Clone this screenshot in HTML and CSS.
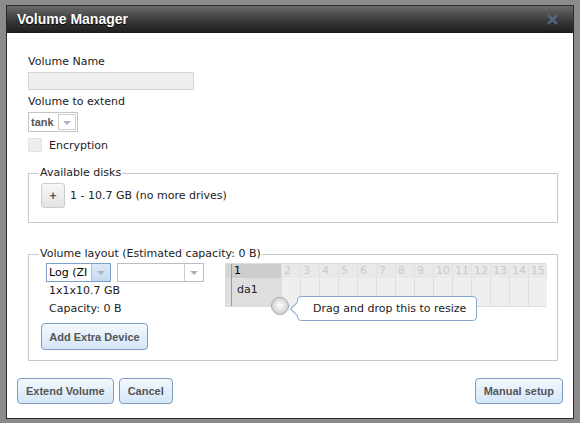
FILE: index.html
```html
<!DOCTYPE html>
<html lang="en">
<head>
    <meta charset="UTF-8">
    <meta name="viewport" content="width=device-width, initial-scale=1.0">
    <title>Volume Manager</title>
    <link rel="stylesheet" href="styles.css">
</head>
<body>
    <div class="dialog">
        <div class="dialog-title">
            <span>Volume Manager</span>
            <svg class="close-icon" width="11" height="11" viewBox="0 0 11 11">
                <path d="M2 2 L9 9 M9 2 L2 9" stroke="#56657d" stroke-width="2.6" stroke-linecap="square"/>
            </svg>
        </div>

        <div class="dialog-body">
            <label class="field-label">Volume Name</label>
            <div class="text-input"></div>

            <label class="field-label spaced">Volume to extend</label>
            <div class="select select-tank">
                <span class="select-value">tank</span>
                <span class="select-arrow"></span>
            </div>

            <div class="check-row">
                <span class="checkbox"></span>
                <span>Encryption</span>
            </div>

            <fieldset class="group group-disks">
                <legend>Available disks</legend>
                <div class="disk-row">
                    <button class="add-btn">+</button>
                    <span>1 - 10.7 GB (no more drives)</span>
                </div>
            </fieldset>

            <fieldset class="group group-layout">
                <legend>Volume layout (Estimated capacity: 0 B)</legend>
                <div class="layout-row">
                    <div class="vdev">
                        <div class="vdev-selects">
                            <div class="select select-type">
                                <span class="select-value">Log (ZI</span>
                                <span class="select-arrow"></span>
                            </div>
                            <div class="select select-blank">
                                <span class="select-value"></span>
                                <span class="select-arrow"></span>
                            </div>
                        </div>
                        <div class="vdev-info">1x1x10.7 GB</div>
                        <div class="vdev-info">Capacity: 0 B</div>
                        <button class="btn btn-extra">Add Extra Device</button>
                    </div>

                    <div class="disk-grid">
                        <div class="gutter head"></div>
                        <div class="col-head active">1</div>
                        <div class="col-head">2</div>
                        <div class="col-head">3</div>
                        <div class="col-head">4</div>
                        <div class="col-head">5</div>
                        <div class="col-head">6</div>
                        <div class="col-head">7</div>
                        <div class="col-head">8</div>
                        <div class="col-head">9</div>
                        <div class="col-head">10</div>
                        <div class="col-head">11</div>
                        <div class="col-head">12</div>
                        <div class="col-head">13</div>
                        <div class="col-head">14</div>
                        <div class="col-head">15</div>

                        <div class="gutter"></div>
                        <div class="cell active">da1</div>
                        <div class="cell"></div>
                        <div class="cell"></div>
                        <div class="cell"></div>
                        <div class="cell"></div>
                        <div class="cell"></div>
                        <div class="cell"></div>
                        <div class="cell"></div>
                        <div class="cell"></div>
                        <div class="cell"></div>
                        <div class="cell"></div>
                        <div class="cell"></div>
                        <div class="cell"></div>
                        <div class="cell"></div>
                        <div class="cell"></div>

                        <span class="resize-handle"></span>
                        <div class="tooltip">Drag and drop this to resize</div>
                    </div>
                </div>
            </fieldset>
        </div>

        <div class="dialog-footer">
            <div class="footer-left">
                <button class="btn">Extend Volume</button>
                <button class="btn">Cancel</button>
            </div>
            <button class="btn">Manual setup</button>
        </div>
    </div>
</body>
</html>
```

FILE: styles.css
```css
body {
    margin: 0;
    padding: 5px 6px 5px 6px;
    background-color: #8b8b8b;
    font-family: "DejaVu Sans", Verdana, sans-serif;
    font-size: 11px;
    color: #222;
}

.dialog {
    width: 568px;
    box-sizing: border-box;
    border: 1px solid #2b2b2b;
    background: #fff;
}

.dialog-title {
    height: 26px;
    display: flex;
    align-items: center;
    justify-content: space-between;
    padding: 0 15px 0 10px;
    background: linear-gradient(#6a6a6a, #3a3a3a 55%, #1f1f1f);
    border-bottom: 1px solid #1a1a1a;
    color: #fff;
    font-family: "Liberation Sans", Arial, sans-serif;
    font-weight: bold;
    font-size: 14px;
    text-shadow: 0 1px 1px #000;
}

.dialog-body {
    padding: 21px 15px 0 21px;
}

.field-label {
    display: block;
    line-height: 16px;
}

.field-label.spaced {
    margin-top: 4px;
}

.text-input {
    margin-top: 2px;
    width: 166px;
    height: 18px;
    box-sizing: border-box;
    background: #efefef;
    border: 1px solid #d4d4d4;
}

/* fake select boxes */
.select {
    display: flex;
    box-sizing: border-box;
    height: 20px;
    border: 1px solid #b9bec6;
    background: #fff;
}

.select-value {
    flex: 1;
    padding-left: 3px;
    line-height: 18px;
    white-space: nowrap;
    overflow: hidden;
}

.select-arrow {
    width: 18px;
    border-left: 1px solid #c9ced6;
    position: relative;
}

.select-arrow::after {
    content: "";
    position: absolute;
    left: 5px;
    top: 7px;
    border-left: 4px solid transparent;
    border-right: 4px solid transparent;
    border-top: 4px solid #a7b4c6;
}

.select-tank {
    margin-top: 2px;
    width: 50px;
    border-color: #c4c4c4;
}

.select-tank .select-value {
    font-family: "Liberation Sans", Arial, sans-serif;
    font-weight: bold;
    color: #555;
    padding-left: 2px;
}

.select-tank .select-arrow {
    margin: 1px;
    width: 16px;
    border: 1px solid #cfcfcf;
}

.select-tank .select-arrow::after {
    left: 4px;
    top: 6px;
}

.check-row {
    margin-top: 6px;
    display: flex;
    align-items: center;
    gap: 7px;
    height: 14px;
}

.checkbox {
    width: 14px;
    height: 14px;
    box-sizing: border-box;
    background: #eee;
    border: 1px solid #e2e2e2;
}

.group {
    margin: 0;
    border: 1px solid #c8c8c8;
    min-width: 0;
}

.group legend {
    padding: 0 1px;
    margin-left: -2px;
    line-height: 16px;
}

.group-disks {
    margin-top: 13px;
    padding: 2px 12px 14px 12px;
}

.disk-row {
    display: flex;
    align-items: center;
    gap: 5px;
}

.add-btn {
    width: 24px;
    height: 25px;
    padding: 0;
    border: 1px solid #cdcdcd;
    border-radius: 3px;
    background: linear-gradient(#f7f7f7, #e4e4e4);
    color: #555;
    font-family: "Liberation Sans", Arial, sans-serif;
    font-size: 12px;
    font-weight: bold;
}

.group-layout {
    margin-top: 23px;
    padding: 1px 11px 10px 12px;
}

.layout-row {
    display: flex;
}

.vdev {
    width: 184px;
}

.vdev-selects {
    display: flex;
    gap: 6px;
    padding-left: 5px;
}

.select-type {
    width: 65px;
    height: 19px;
    border-color: #7c9fc8;
}

.select-type .select-value {
    color: #000;
    padding-left: 2px;
    font-size: 11px;
}

.select-type .select-arrow {
    border-left-color: #a9c3e0;
    background: linear-gradient(#dceaf8, #c4daf2);
}

.select-blank {
    width: 87px;
    height: 19px;
}

.vdev-info {
    padding-left: 8px;
    line-height: 18px;
}

.btn {
    height: 26px;
    padding: 0 8px;
    border: 1px solid #7d9cc0;
    border-radius: 4px;
    background: linear-gradient(#f3f8fd, #d4e6f8);
    color: #555;
    font-family: "Liberation Sans", Arial, sans-serif;
    font-size: 11px;
    font-weight: bold;
    white-space: nowrap;
}

.btn-extra {
    margin-top: 5px;
    width: 107px;
    height: 27px;
    padding: 0;
}

/* disk grid with 15 slots */
.disk-grid {
    position: relative;
    display: grid;
    grid-template-columns: 6px 49px repeat(14, 19px);
    grid-template-rows: 14px 28px;
    align-self: flex-start;
    border: 1px solid #dcdcdc;
    box-sizing: border-box;
    width: 321px;
}

.gutter {
    background: #dedede;
    border-right: 1px solid #9a9a9a;
}

.gutter.head {
    background: #d4d4d4;
}

.col-head {
    background: #e9e9e9;
    color: #c9c9c9;
    line-height: 13px;
    padding-left: 2px;
    border-left: 1px solid #e2e2e2;
}

.col-head.active {
    background: #cdcdcd;
    color: #000;
    border-left: none;
}

.cell {
    background: #efefef;
    border-left: 1px solid #dedede;
    padding: 5px 0 0 5px;
}

.cell.active {
    background: #dedede;
    border-left: none;
}

.resize-handle {
    position: absolute;
    left: 45px;
    top: 33px;
    width: 18px;
    height: 18px;
    box-sizing: border-box;
    border-radius: 50%;
    border: 1px solid #a8a8a8;
    background: radial-gradient(circle at 50% 45%, #fdfdfd, #d8d8d8 60%, #bdbdbd);
}

.tooltip {
    position: absolute;
    left: 71px;
    top: 32px;
    width: 180px;
    height: 25px;
    box-sizing: border-box;
    padding-left: 15px;
    line-height: 23px;
    background: #fff;
    border: 1px solid #86a9d0;
    border-radius: 4px;
    white-space: nowrap;
}

.tooltip::before {
    content: "";
    position: absolute;
    left: -6px;
    top: 7px;
    width: 9px;
    height: 9px;
    background: #fff;
    border-left: 1px solid #86a9d0;
    border-bottom: 1px solid #86a9d0;
    transform: rotate(45deg);
}

.dialog-footer {
    display: flex;
    justify-content: space-between;
    padding: 17px 10px 14px 10px;
}

.footer-left {
    display: flex;
    gap: 5px;
}
```
